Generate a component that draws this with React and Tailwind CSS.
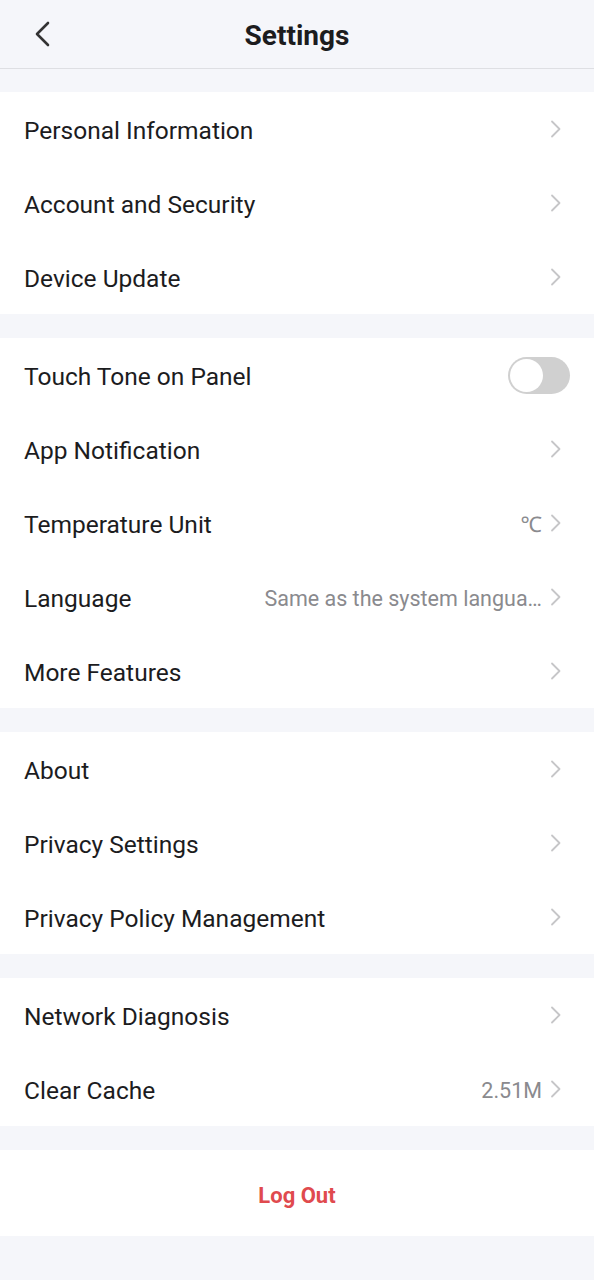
import React from "react";

const Chevron = () => (
  <svg width="12" height="18" viewBox="0 0 12 18" className="shrink-0">
    <path d="M2 1.5 L9.5 9 L2 16.5" fill="none" stroke="#c6c6c8" strokeWidth="1.8" strokeLinecap="round" strokeLinejoin="round" />
  </svg>
);

const Row = ({ label, value, toggle }) => (
  <div className="h-[74px] flex items-center pl-6 pr-[32px]">
    <div className="text-[24.5px] text-[#1c1c1e] shrink-0 pt-1">{label}</div>
    <div className="flex-1 min-w-0 flex items-center justify-end gap-2">
      {toggle ? (
        <div className="w-[62px] h-[37px] rounded-full bg-[#d0d0d0] relative -mr-[8px]">
          <div className="absolute left-[2px] top-[2px] w-[33px] h-[33px] rounded-full bg-white" />
        </div>
      ) : (
        <>
          {value && (
            <span className="text-[21.5px] text-[#8a8a8e] whitespace-nowrap ml-6 pt-1">{value}</span>
          )}
          <Chevron />
        </>
      )}
    </div>
  </div>
);

const Section = ({ children }) => <div className="bg-white mt-6">{children}</div>;

export default function App() {
  return (
    <div className="min-h-[1280px] bg-[#f5f6fa]" style={{ fontFamily: "Roboto, 'Noto Sans', sans-serif" }}>
      <div className="h-[69px] relative flex items-center justify-center border-b border-[#dedfe3]">
        <svg width="20" height="28" viewBox="0 0 20 28" className="absolute left-[32px] top-[20px]">
          <path d="M16 3 L5 14 L16 25" fill="none" stroke="#333" strokeWidth="2.6" strokeLinecap="round" strokeLinejoin="round" />
        </svg>
        <div className="text-[28px] font-bold text-[#1c1c1e] pt-1">Settings</div>
      </div>
      <div>
        <div className="bg-white mt-[23px]">
          <Row label="Personal Information" />
          <Row label="Account and Security" />
          <Row label="Device Update" />
        </div>
        <Section>
          <Row label="Touch Tone on Panel" toggle />
          <Row label="App Notification" />
          <Row label="Temperature Unit" value="℃" />
          <Row label="Language" value="Same as the system langua…" />
          <Row label="More Features" />
        </Section>
        <Section>
          <Row label="About" />
          <Row label="Privacy Settings" />
          <Row label="Privacy Policy Management" />
        </Section>
        <Section>
          <Row label="Network Diagnosis" />
          <Row label="Clear Cache" value="2.51M" />
        </Section>
        <div className="bg-white mt-6 h-[86px] flex items-center justify-center">
          <span className="text-[22px] font-bold text-[#e04a4e] pt-1">Log Out</span>
        </div>
      </div>
    </div>
  );
}
